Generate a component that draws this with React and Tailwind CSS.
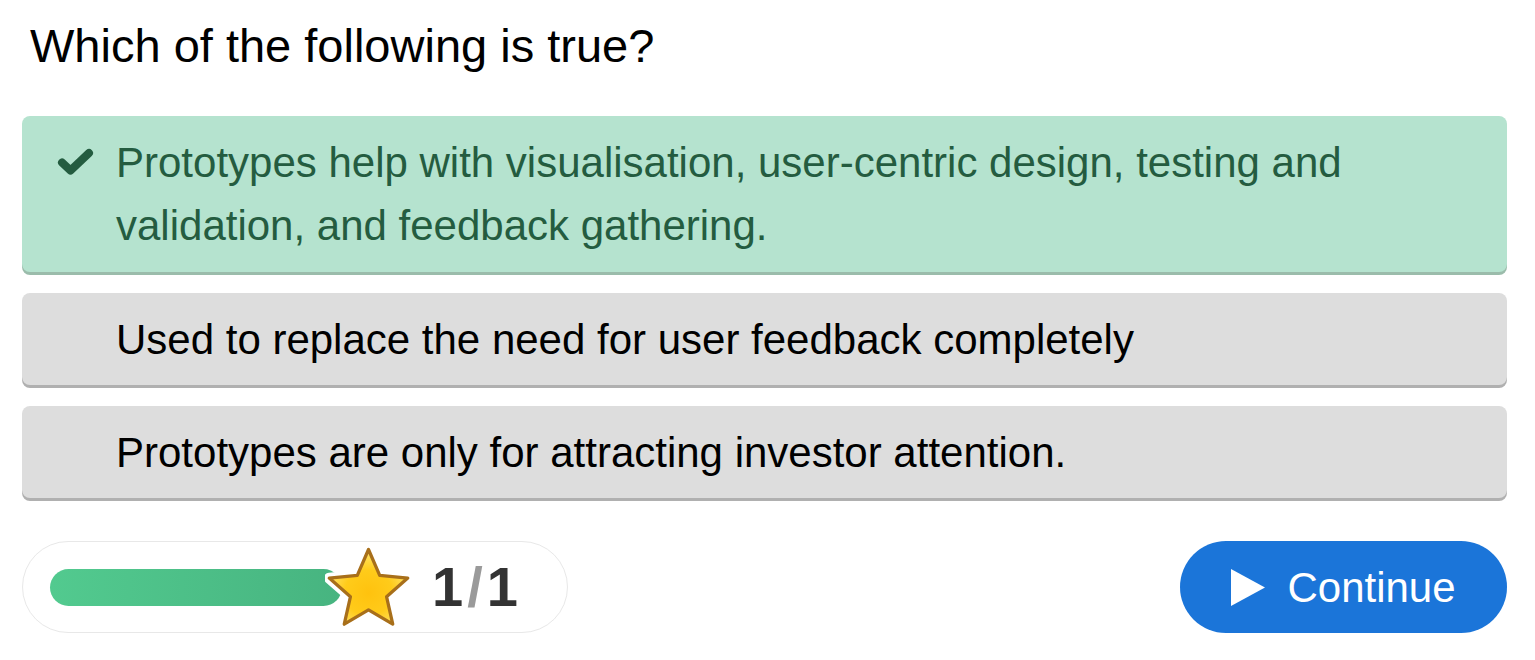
import React from "react";

const options = [
  { text: "Prototypes help with visualisation, user-centric design, testing and validation, and feedback gathering.", correct: true },
  { text: "Used to replace the need for user feedback completely", correct: false },
  { text: "Prototypes are only for attracting investor attention.", correct: false },
];

function Star() {
  const pts = "40,3 50.3,26.8 76.1,29.3 56.6,46.4 62.3,71.7 40,58.5 17.7,71.7 23.4,46.4 3.9,29.3 29.7,26.8";
  return (
    <svg width="87" height="82" viewBox="0 0 80 75" className="relative z-10 -ml-[17px] shrink-0">
      <defs>
        <radialGradient id="starFill" cx="50%" cy="58%" r="55%">
          <stop offset="0%" stopColor="#ffc20e" />
          <stop offset="55%" stopColor="#ffcb1a" />
          <stop offset="100%" stopColor="#ffe46b" />
        </radialGradient>
      </defs>
      <polygon points={pts} fill="#fff" stroke="#fff" strokeWidth="10" strokeLinejoin="round" />
      <polygon points={pts} fill="url(#starFill)" stroke="#a86f1a" strokeWidth="3" strokeLinejoin="round" />
    </svg>
  );
}

export default function App() {
  return (
    <div className="min-h-[660px] bg-white pl-[22px] pr-[28px] pt-[18px] font-['Liberation_Sans',Arial,sans-serif]">
      {/* Question */}
      <h1 className="pl-[8px] text-[47px] leading-[56px] text-black">Which of the following is true?</h1>

      {/* Options */}
      <div className="mt-[42px] flex flex-col gap-[21px]">
        {options.map((o, i) =>
          o.correct ? (
            <div key={i} className="flex rounded-[8px] bg-[#b5e3cf] pl-[35px] pr-[40px] py-[15px] shadow-[0_3px_0_#9bbcab]">
              <div className="w-[59px] shrink-0 pt-[17px]">
                <svg width="37" height="28" viewBox="0 0 37 28">
                  <path d="M5 14.5 L13.5 22.5 L32 5" fill="none" stroke="#245c40" strokeWidth="8" strokeLinejoin="round" strokeLinecap="round" />
                </svg>
              </div>
              <span className="text-[42px] leading-[63px] text-[#245c40]">{o.text}</span>
            </div>
          ) : (
            <div key={i} className="flex h-[92px] items-center rounded-[8px] bg-[#dddddd] pl-[94px] shadow-[0_3px_0_#b0b0b0]">
              <span className="text-[42px] leading-[63px] text-black">{o.text}</span>
            </div>
          )
        )}
      </div>

      {/* Footer */}
      <div className="mt-[43px] flex items-center justify-between">
        <div className="flex h-[92px] w-[546px] items-center rounded-full border border-[#e8e8e8] pl-[27px]">
          <div className="h-[37px] w-[292px] shrink-0 rounded-full bg-gradient-to-r from-[#52ca8f] to-[#47b480]" />
          <Star />
          <div className="ml-[20px] text-[56px] font-bold leading-none text-[#333]">
            1<span className="mx-[4px] text-[#9a9a9a]">/</span>1
          </div>
        </div>
        <button className="flex h-[92px] w-[327px] items-center justify-center gap-[22px] rounded-full bg-[#1b75d9] text-[42px] text-white">
          <svg width="34" height="37" viewBox="0 0 34 37">
            <path d="M0 0 L34 18.5 L0 37 Z" fill="#fff" />
          </svg>
          Continue
        </button>
      </div>
    </div>
  );
}
